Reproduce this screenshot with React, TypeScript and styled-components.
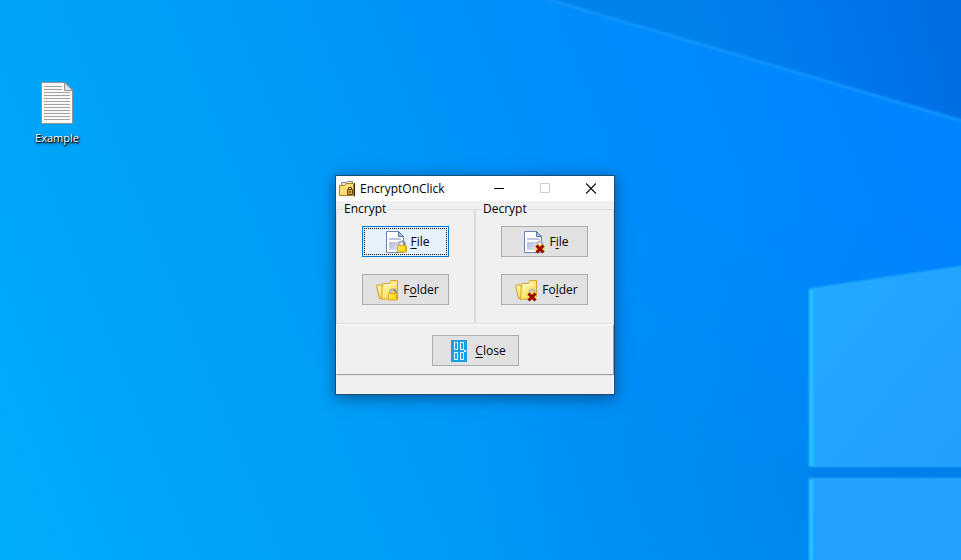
import React from "react";
import styled, { createGlobalStyle, css } from "styled-components";

const GlobalStyle = createGlobalStyle`
  *, *::before, *::after { box-sizing: border-box; }
  body {
    margin: 0;
    font-family: "Open Sans", "Noto Sans", sans-serif;
    font-size: 12px;
    line-height: 16px;
    color: #000;
  }
`;

const Desktop = styled.main`
  position: relative;
  min-height: 100vh;
  overflow: hidden;
  background: #0090f8;
`;

const WallpaperArt = styled.svg`
  position: absolute;
  inset: 0;
  width: 100%;
  height: 100%;
`;

const Shortcut = styled.button`
  position: absolute;
  left: 20px;
  top: 82px;
  width: 74px;
  padding: 0;
  border: 0;
  background: none;
  display: flex;
  flex-direction: column;
  align-items: center;
  gap: 6px;
  font: inherit;
  font-size: 11px;
  color: #fff;
  text-shadow: 1px 1px 1px #000, 0 1px 2px rgba(0, 0, 0, 0.8), 1px 2px 3px rgba(0, 0, 0, 0.6);
`;

const Window = styled.section`
  position: absolute;
  left: 335px;
  top: 175px;
  width: 280px;
  border: 1px solid #1b4c72;
  background: #f0f0f0;
  box-shadow: 0 3px 14px rgba(0, 20, 50, 0.5);
`;

const TitleBar = styled.header`
  display: flex;
  align-items: center;
  height: 25px;
  padding-left: 3px;
  background: #fff;
`;

const Title = styled.h1`
  flex: 1;
  margin: 0 0 0 5px;
  font-size: 12px;
  font-weight: 400;
`;

const CaptionButton = styled.button`
  display: grid;
  place-items: center;
  width: 46px;
  height: 25px;
  padding: 0;
  border: 0;
  background: none;
`;

const Groups = styled.div`
  display: grid;
  grid-template-columns: 1fr 1fr;
`;

const Group = styled.fieldset`
  display: flex;
  flex-direction: column;
  align-items: center;
  gap: 17px;
  min-width: 0;
  margin: 0;
  padding: 9px 0 18px;
  border: 1px solid #dcdcdc;
`;

const Legend = styled.legend`
  margin-left: 6px;
  padding: 0 1px;
`;

const ActionButton = styled.button<{ $active?: boolean }>`
  display: flex;
  align-items: center;
  justify-content: center;
  gap: 4px;
  width: 87px;
  height: 31px;
  padding: 0 0 0 4px;
  border: 1px solid #adadad;
  background: #e1e1e1;
  color: #000;
  font: inherit;

  ${(p) =>
    p.$active &&
    css`
      border-color: #0078d7;
      background: #e5f1fb;
      outline: 1px dotted #000;
      outline-offset: -3px;
    `}
`;

const Mnemonic = styled.u`
  text-underline-offset: 2px;
  text-decoration-thickness: 1px;
  text-decoration-skip-ink: none;
`;

const Footer = styled.footer`
  display: flex;
  justify-content: center;
  padding: 10px 0 8px;
  border: 1px solid #fff;
  border-right-color: #a0a0a0;
  border-bottom-color: #a0a0a0;
`;

const StatusBar = styled.div`
  height: 19px;
  border-top: 1px solid #e3e3e3;
  border-right: 1px solid #fafafa;
`;

const CloseMark = styled.span`
  display: flex;
  align-items: center;
  gap: 8px;
  padding-left: 3px;
`;

const Wallpaper = () => (
  <WallpaperArt viewBox="0 0 961 560" preserveAspectRatio="xMaxYMid slice" aria-hidden="true">
    <defs>
      <linearGradient id="sky" gradientUnits="userSpaceOnUse" x1="0" y1="520" x2="900" y2="160">
        <stop offset="0" stopColor="#00acfc" />
        <stop offset="0.35" stopColor="#009ff8" />
        <stop offset="0.6" stopColor="#0092f9" />
        <stop offset="0.8" stopColor="#008bfc" />
        <stop offset="1" stopColor="#0084ff" />
      </linearGradient>
      <linearGradient id="dusk" gradientUnits="userSpaceOnUse" x1="700" y1="60" x2="940" y2="-10">
        <stop offset="0" stopColor="#0082ec" />
        <stop offset="0.5" stopColor="#0079ed" />
        <stop offset="1" stopColor="#006de2" />
      </linearGradient>
      <radialGradient id="floor" gradientUnits="userSpaceOnUse" cx="800" cy="500" r="320">
        <stop offset="0" stopColor="#0080dc" stopOpacity="0.35" />
        <stop offset="1" stopColor="#0080dc" stopOpacity="0" />
      </radialGradient>
      <linearGradient id="pane" x1="0" y1="0" x2="1" y2="1">
        <stop offset="0" stopColor="#20aaff" />
        <stop offset="1" stopColor="#229dff" />
      </linearGradient>
      <filter id="soft" x="-10%" y="-10%" width="120%" height="120%">
        <feGaussianBlur stdDeviation="0.8" />
      </filter>
    </defs>
    <rect width="961" height="560" fill="url(#sky)" />
    <rect width="961" height="560" fill="url(#floor)" />
    <path d="M542 0H961V121Z" fill="url(#dusk)" />
    <path d="M542 -2L962 121" stroke="#1296ff" strokeWidth="3" filter="url(#soft)" />
    <path d="M809 467H961V478H809Z" fill="#0080ea" />
    <g filter="url(#soft)">
      <path d="M809 289L970 265V467H809Z" fill="url(#pane)" />
      <path d="M809 478H970V570H809Z" fill="#219fff" />
      <path d="M811 290V466M811 479V570" stroke="#26c4ff" strokeWidth="4" />
      <path d="M809 289L970 265M812 466H970M812 479H970" stroke="#2ab3ff" strokeWidth="1" fill="none" />
    </g>
  </WallpaperArt>
);

const TextFileIcon = () => (
  <svg width="32" height="42" viewBox="0 0 32 42" aria-hidden="true">
    <path d="M.5.5H24L31.500 8V41.500H.5Z" fill="#f8f8f6" stroke="#8f9498" />
    <path d="M23.500.5V8.500H31.500Z" fill="#dfe5e8" stroke="#8f9498" />
    <path
      d="M3 4.500H21M3 7.500H21M3 10.500H29M3 13.500H29M3 16.500H29M3 19.500H29M3 22.500H29M3 25.500H29M3 28.500H29M3 31.500H29M3 34.500H29M3 37.500H29"
      stroke="#a3a3a3"
    />
  </svg>
);

const AppIcon = () => (
  <svg width="16" height="16" viewBox="0 0 16 16" aria-hidden="true">
    <path d="M2.500 5V1.500H7.500L8.500.5H13.500V5" fill="#e6e6e6" stroke="#858b91" />
    <path d="M15.500 2V15.500" stroke="#2b220c" />
    <path d="M.5 14.500V4.500H5.500L7 2.500H14.500V14.500Z" fill="#ffdc78" stroke="#b28416" />
    <path d="M9.500 9V6.500H12.500V9" fill="none" stroke="#5d4718" />
    <path d="M8.500 8.500H13.500V13.500H8.500Z" fill="#e2a93a" stroke="#5d4312" />
    <path d="M10.500 10H11.500V12H10.500Z" fill="#33250b" />
  </svg>
);

type BadgeKind = "lock" | "remove";

const LockBadge = () => (
  <g>
    <path d="M13.200 17V14.500Q13.200 11.500 16 11.500T18.800 14.500V17" fill="none" stroke="#8b8e92" strokeWidth="2" />
    <path d="M13.200 16V14.500Q13.200 11.500 16 11.500" fill="none" stroke="#d4d6d8" />
    <rect x="11.500" y="15.500" width="9" height="6.500" rx="1" fill="#ffdc24" stroke="#dca51b" />
    <path d="M13 16V21" stroke="#fff6a0" />
    <path d="M19.500 16V21.500" stroke="#e0a412" />
  </g>
);

const RemoveBadge = () => (
  <g>
    <path d="M13.500 16V14Q13.500 11.500 16 11.500T18.500 14V16" fill="none" stroke="#b9b9bb" strokeWidth="2" />
    <path d="M13 14.500H18L20.500 17V21.500H11.500V16Z" fill="#f9dc38" />
    <path d="M12.500 15.500L19.500 22.500M19.500 15.500L12.500 22.500" stroke="#9d0303" strokeWidth="3" />
  </g>
);

const Badge = ({ kind }: { kind: BadgeKind }) => (kind === "lock" ? <LockBadge /> : <RemoveBadge />);

const FileIcon = ({ kind }: { kind: BadgeKind }) => {
  const sheet = React.useId();
  return (
    <svg width="21" height="24" viewBox="0 0 21 24" aria-hidden="true">
      <linearGradient id={sheet} x1="0" y1="0" x2="1" y2="1">
        <stop offset="0" stopColor="#b4bddb" />
        <stop offset="1" stopColor="#dfe3f1" />
      </linearGradient>
      <path d="M.5 1.500H12.500L17.500 7V22.500H.5Z" fill="#fff" stroke="#6e83b5" />
      <path d="M12.500 1.500V6.500H17.500Z" fill="#a9c6ea" stroke="#57749f" />
      <path d="M3 8H15V10H3Z" fill="#bcc5e0" />
      <path d="M3 12H13V20H3Z" fill={`url(#${sheet})`} />
      <Badge kind={kind} />
    </svg>
  );
};

const FolderIcon = ({ kind }: { kind: BadgeKind }) => {
  const paper = React.useId();
  return (
    <svg width="23" height="24" viewBox="0 0 23 24" aria-hidden="true">
      <linearGradient id={paper} x1="0" y1="0" x2="1" y2="1">
        <stop offset="0" stopColor="#fffbc8" />
        <stop offset="0.5" stopColor="#fde978" />
        <stop offset="1" stopColor="#f3c630" />
      </linearGradient>
      <path d="M3.500 20.500L.5 7.500L4 6.500L5 8H9V20.500Z" fill={`url(#${paper})`} stroke="#cf9e28" />
      <path d="M5.500 21.500L6.500 5.500H13.500L15 2.500H21.500V19L17 20.500Z" fill={`url(#${paper})`} stroke="#d6a62c" />
      <path d="M8 7.500L20 6.500" stroke="#fffbd8" />
      <g transform="translate(1 0)">
        <Badge kind={kind} />
      </g>
    </svg>
  );
};

const DoorIcon = () => (
  <svg width="16" height="22" viewBox="0 0 16 22" aria-hidden="true">
    <path d="M0 0H16V22H0Z" fill="#1b9fe3" />
    <path
      d="M3.500 2.500H6.500V9.500H3.500ZM9.500 2.500H12.500V9.500H9.500ZM3.500 12.500H6.500V19.500H3.500ZM9.500 12.500H12.500V19.500H9.500Z"
      fill="none"
      stroke="#fff"
    />
    <path d="M13 10H15V12H13Z" fill="#fff" />
  </svg>
);

export default function App() {
  return (
    <>
      <GlobalStyle />
      <Desktop>
        <Wallpaper />
        <Shortcut type="button">
          <TextFileIcon />
          Example
        </Shortcut>
        <Window aria-label="EncryptOnClick">
          <TitleBar>
            <AppIcon />
            <Title>EncryptOnClick</Title>
            <CaptionButton type="button" aria-label="Minimize">
              <svg width="10" height="11" viewBox="0 0 10 11">
                <path d="M0 5.500H10" stroke="#000" />
              </svg>
            </CaptionButton>
            <CaptionButton type="button" aria-label="Maximize" disabled>
              <svg width="10" height="11" viewBox="0 0 10 11">
                <path d="M.5.5H9.500V9.500H.5Z" fill="none" stroke="#ccc" />
              </svg>
            </CaptionButton>
            <CaptionButton type="button" aria-label="Close window">
              <svg width="10" height="11" viewBox="0 0 10 11">
                <path d="M0 .5L10 10.500M10 .5L0 10.500" stroke="#000" strokeWidth="1.200" />
              </svg>
            </CaptionButton>
          </TitleBar>
          <Groups>
            <Group>
              <Legend>Encrypt</Legend>
              <ActionButton type="button" $active>
                <FileIcon kind="lock" />
                <span><Mnemonic>F</Mnemonic>ile</span>
              </ActionButton>
              <ActionButton type="button">
                <FolderIcon kind="lock" />
                <span>F<Mnemonic>o</Mnemonic>lder</span>
              </ActionButton>
            </Group>
            <Group>
              <Legend>Decrypt</Legend>
              <ActionButton type="button">
                <FileIcon kind="remove" />
                <span>F<Mnemonic>i</Mnemonic>le</span>
              </ActionButton>
              <ActionButton type="button">
                <FolderIcon kind="remove" />
                <span>Fo<Mnemonic>l</Mnemonic>der</span>
              </ActionButton>
            </Group>
          </Groups>
          <Footer>
            <ActionButton type="button">
              <CloseMark>
                <DoorIcon />
                <span><Mnemonic>C</Mnemonic>lose</span>
              </CloseMark>
            </ActionButton>
          </Footer>
          <StatusBar role="status" />
        </Window>
      </Desktop>
    </>
  );
}
